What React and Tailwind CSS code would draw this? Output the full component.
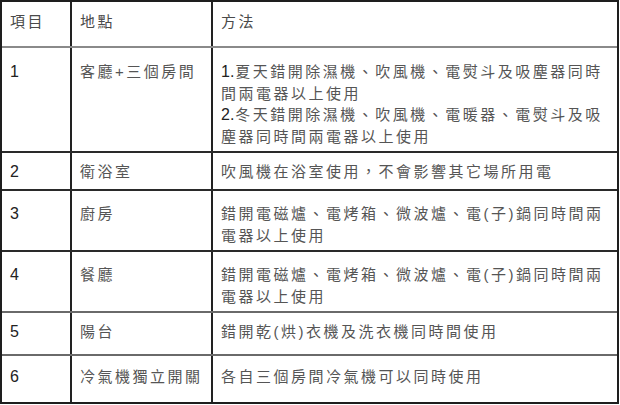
const rows = [
  {
    no: '1',
    place: '客廳+三個房間',
    h: 'h-[105px]',
    pt: 'pt-[13px]',
    lines: [
      '夏天錯開除濕機、吹風機、電熨斗及吸塵器同時',
      '間兩電器以上使用',
      '冬天錯開除濕機、吹風機、電暖器、電熨斗及吸',
      '塵器同時間兩電器以上使用',
    ],
    nums: ['1.', '', '2.', ''],
  },
  { no: '2', place: '衛浴室', h: 'h-[38px]', pt: 'pt-[8px]', lines: ['吹風機在浴室使用，不會影響其它場所用電'] },
  {
    no: '3',
    place: '廚房',
    h: 'h-[61px]',
    pt: 'pt-[12px]',
    lines: ['錯開電磁爐、電烤箱、微波爐、電(子)鍋同時間兩', '電器以上使用'],
  },
  {
    no: '4',
    place: '餐廳',
    h: 'h-[61px]',
    pt: 'pt-[12px]',
    lines: ['錯開電磁爐、電烤箱、微波爐、電(子)鍋同時間兩', '電器以上使用'],
  },
  { no: '5', place: '陽台', h: 'h-[43px]', pt: 'pt-[8px]', lines: ['錯開乾(烘)衣機及洗衣機同時間使用'] },
  { no: '6', place: '冷氣機獨立開關', h: 'h-[46px]', pt: 'pt-[10px]', lines: ['各自三個房間冷氣機可以同時使用'] },
];

const cjk = "font-['Liberation_Sans','Noto_Sans_CJK_TC',sans-serif]";

export default function App() {
  return (
    <div className={`w-[620px] h-[405px] bg-white ${cjk}`}>
      <div className="w-[619px] h-[404px] border-2 border-[#1e1e1e] flex flex-col">
        {/* header */}
        <div className="grid grid-cols-[70px_141px_1fr] h-[46px] border-b-2 border-[#8a8a8a] text-[15px] tracking-[2.5px] text-[#4a4a4a] leading-[21.5px]">
          <div className="border-r-2 border-[#222] pl-2 pt-[9px]">項目</div>
          <div className="border-r-2 border-[#222] pl-2 pt-[9px]">地點</div>
          <div className="pl-2 pt-[9px]">方法</div>
        </div>

        {rows.map((r, i) => (
          <div
            key={r.no}
            className={`grid grid-cols-[70px_141px_1fr] leading-[21.5px] ${r.h} ${i < rows.length - 1 ? (i >= 3 ? 'border-b-2 border-[#6a6a6a]' : 'border-b-2 border-[#2a2a2a]') : ''}`}
          >
            <div className={`border-r-2 border-[#222] pl-2 ${r.pt} text-[16px] text-[#222]`}>{r.no}</div>
            <div className={`border-r-2 border-[#222] pl-2 ${r.pt} text-[15px] tracking-[2.5px] text-[#555]`}>
              {r.place}
            </div>
            <div className={`pl-2 ${r.pt} text-[15px] tracking-[2.5px] text-[#555] whitespace-nowrap`}>
              {r.lines.map((l, j) => (
                <div key={j}>
                  {r.nums && r.nums[j] ? (
                    <span className="tracking-normal text-[16px] text-[#222] mr-[1px]">{r.nums[j]}</span>
                  ) : null}
                  {l}
                </div>
              ))}
            </div>
          </div>
        ))}
      </div>
    </div>
  );
}
